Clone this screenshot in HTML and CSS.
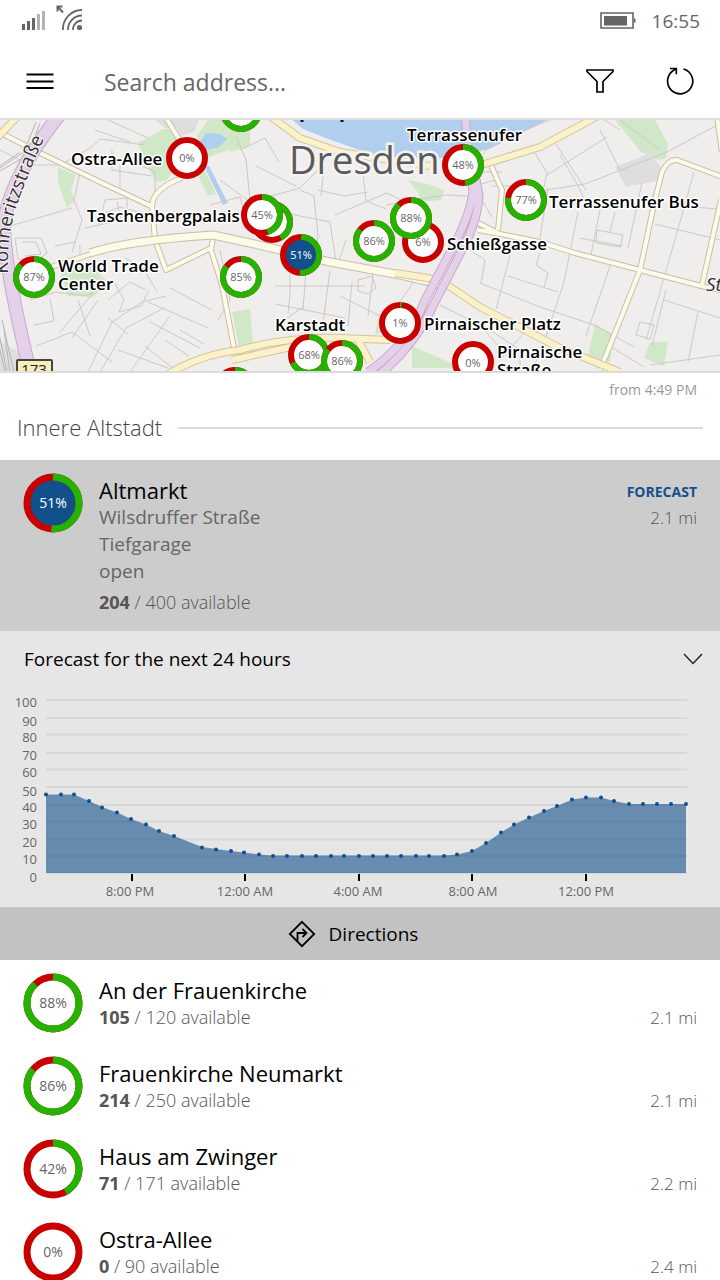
FILE: index.html
```html
<!DOCTYPE html>
<html lang="en">
<head>
<meta charset="utf-8">
<meta name="viewport" content="width=device-width, initial-scale=1">
<title>Parking – Dresden</title>
<link rel="stylesheet" href="styles.css">
</head>
<body>
<div class="app">
  <div class="status">
    <svg class="status-left" width="64" height="32" viewBox="0 0 64 32" aria-hidden="true">
      <path fill="#666" d="M2 20h3v6H2zM7 17h3v9H7zM12 14h3v12h-3z"/>
      <path fill="#b3b3b3" d="M17 10h3v16h-3zM22 7h3v19h-3z"/>
      <g fill="none" stroke="#666" stroke-width="1.8"><path d="M43 26A19 19 0 0 1 62 6"/><path d="M48 26A14 14 0 0 1 62 11.500"/><path d="M53 26A9 9 0 0 1 62 16.500"/></g>
      <circle cx="59.500" cy="23.500" r="2.600" fill="#666"/>
      <path d="M43 8.500L38 3M37.500 7.500V2.500H42.500" fill="none" stroke="#666" stroke-width="2"/>
    </svg>
    <div class="status-right">
      <svg width="36" height="18" viewBox="0 0 36 18" aria-hidden="true"><path d="M1 1h32v15H1z" fill="none" stroke="#666" stroke-width="1.600"/><path d="M4 4h23v9.500H4zM34 6.500h1.500v4H34z" fill="#666"/></svg>
      <span class="clock">16:55</span>
    </div>
  </div>

  <header class="bar">
    <button class="icon-btn" type="button" aria-label="Menu"><svg width="28" height="18" viewBox="0 0 28 18"><path d="M0.500 2.500h27M0.500 9.500h27M0.500 16h27" stroke="#000" stroke-width="1.800"/></svg></button>
    <input class="search" type="text" placeholder="Search address..." aria-label="Search address">
    <button class="icon-btn" type="button" aria-label="Filter"><svg width="28" height="28" viewBox="0 0 28 28"><path d="M1 3h26v1.500L17 14.500V25h-6V14.500L1 4.500z" fill="none" stroke="#000" stroke-width="1.700"/></svg></button>
    <button class="icon-btn" type="button" aria-label="Refresh"><svg width="28" height="30" viewBox="0 0 28 30"><path d="M17.500 3A12.600 12.600 0 1 1 7 4.800L10 2.500M4 2.500h6.300v5.800" fill="none" stroke="#000" stroke-width="1.700"/></svg></button>
  </header>

  <svg class="map" viewBox="0 120 720 251" preserveAspectRatio="xMidYMid slice" role="img" aria-label="Map of car parks in Dresden">
    <defs><path id="street-line" d="M8 274Q7 235 16 208Q26 178 47 132"/></defs>
    <rect class="land" x="-400" y="0" width="1600" height="600"/>
    <g class="park">
      <path d="M138 143l25-14 12 0 12 21-20 30-12 2zM197 136l12-18h35v26l-37 14zM58 167l18 8-5 15 4 10-8 8-9-25zM200 160l16 34-8 2-14-28zM60 270l28-9 20 22-15 14-25-1zM232 312l18-3 3 35-14 3zM228 120h22v26l-20 6z"/>
      <path d="M408 180l20 4 16 6-3 10-20 2-3-10zM615 120h40l13 24-2 14-8 2-18-9zM595 324l18 10-3 28-22-6zM650 342h18l-4 24-20-8zM378 318l12-8-3 22-12 2zM412 346l50 22h-50z"/>
    </g>
    <g class="block"><path d="M174 120h25l-5 12-14 4zM615 167l35-14 12 16-6 12-30 6zM0 342l20 10v20H0zM155 120h40v8h-30z"/></g>
    <path class="water" d="M283 112l20 17 25 10 40 14 40 5 45 0 35-9 30-14 36-19zM198 145l8-12 14 1 7 5-8 8-11 3-8-2zM204 166l5 0 19 37-5 2z"/>

    <g class="lane">
      <path d="M0 150l30 15 30 0 32-18 8-8 45 6M95 130l35 12M108 120l40 18M80 172l-6 28 8 20-10 32M112 150v20l40 6M120 165v22M130 160l25 12v20M105 200l-6 24 28-6v-20l-22 2M10 226l62-18M85 228l36-8-4-18M15 238h26l6 15-8 6H18zM22 242h14l5 12-16 2M80 245v20M100 215l20-8 30 8M55 246l20-4"/>
      <path d="M30 300l26-8 30 4 28-14 10 18-5 12 22-6 8-16M34 325l20-4-4-22M36 346l36-14 40 30M60 332l34-40M72 338l26-38M88 372l24-50 30-20 24-6M100 372l26-44 38-20M118 350l50 18M130 372l40-56M108 318l20 16M148 302l60 26M150 322l50 26M170 288l42 22M145 346l30 24M165 340l24 16M180 330l24 14M125 258l18 10 14 24M108 300l22-18 16 8M220 250l10 50-12 20M78 300l12 36"/>
      <path d="M210 205l30-8 8 28M220 180l30 22 50-14 22-22M250 200l-4-40-10-24M256 166l40 20M240 150l25-12 14 24M300 190l14 6 4 40-4 28M318 190l26 6 24-4M290 214l40 8 6 40M335 215l52-22 20 10M346 240l-8 24M325 160l-4 36M362 165l4 36 20 8M275 286l90 0M290 264v30l-2 20M306 270l-3 40M275 304l70 14M282 322l22-16M330 270l-8 60M352 282l-4 44M374 266l-6 50M358 280l14-4 4 12-8 6-10-3zM340 296l40 20M420 272l-20 30M386 205l60-10 34 2 12 20M455 240l30 20-4 24M440 305l40 20 30 34"/>
      <path d="M535 153l12 20-4 18-12 6M547 175l60-38M556 144l30 46M600 130l20 40M545 190l40-6 82-32 52-28M560 155l20 34 8 20M620 130l-22-14M492 186l40 0M548 188l-8 50M578 212l-14 70-20 60M600 210l-10 50M615 212l-5 20M642 182l-14 66M620 120l40 30M597 230l26 5-3 12-24-4zM580 238l42 8M510 255l-14 54M540 253l-4 12 12 8-4 14M508 276l50 16M480 283l60 24 54 18 40 22M610 266l-24 70M694 172l-14 50-34 118M655 224l65 16M668 205l50 4M666 290l-14 56M664 300l56 18M698 312l-10 50M640 322l14 3-4 14-14-4zM650 365l70-10M608 345l36 22M490 330l30 20 0 22M500 360l30-34M530 372l18-32 40 20"/>
      <path d="M495 180l-14 4M480 172h22M492 124l-8 30M500 140l60-24M486 150l60-30"/>
    </g>
    <g class="rail"><path d="M0 168l24-16 12-30M0 171l28-16 12-32M0 166l20-14M4 330l6 42M0 338l7 34M0 350l5 22M2 320l12 52"/></g>

    <g class="road-edge">
      <path d="M-5 130L40 153L100 182L151 206M166 118L187 152M182 178Q154 188 152 205L155 240L166 270L211 248M213 238L211 250L222 285L234 348M35 272L85 256Q105 248 140 241Q180 235 213 235L250 243L330 262L400 275L445 288"/>
      <path d="M478 223L500 234L540 242L575 253L640 270L705 287L725 291M725 178L677 160Q668 159 662 172L655 200L640 270L613 338L600 370M717 116L722 152M721 200L702 285M490 163L502 190L498 230M478 230L500 234"/>
    </g>
    <g class="road">
      <path d="M-5 130L40 153L100 182L151 206M166 118L187 152M182 178Q154 188 152 205L155 240L166 270L211 248M213 238L211 250L222 285L234 348M35 272L85 256Q105 248 140 241Q180 235 213 235L250 243L330 262L400 275L445 288"/>
      <path d="M478 223L500 234L540 242L575 253L640 270L705 287L725 291M725 178L677 160Q668 159 662 172L655 200L640 270L613 338L600 370M717 116L722 152M721 200L702 285M490 163L502 190L498 230M478 230L500 234"/>
    </g>
    <path class="road-edge wide" d="M90 253Q130 240 213 235L250 243L330 262L400 275L440 284"/>
    <path class="road wide" d="M90 253Q130 240 213 235L250 243L330 262L400 275L440 284"/>
    <path class="main-edge" d="M-5 140L18 116M165 376Q200 354 240 350Q290 336 340 338L390 340M232 360L300 345M395 273L440 280L480 307L560 348L620 372M270 116L300 138L340 152L430 166M478 166L540 147L598 116M358 340L370 362"/>
    <path class="main" d="M-5 140L18 116M165 376Q200 354 240 350Q290 336 340 338L390 340M232 360L300 345M395 273L440 280L480 307L560 348L620 372M270 116L300 138L340 152L430 166M478 166L540 147L598 116M358 340L370 362"/>
    <g class="trunk-edge"><path class="trunk-l" d="M60 114Q8 180 4 225Q4 265 31 376"/><path d="M465 114L470 165L473 192Q470 215 455 243L425 300Q408 345 368 372M474 170L479 195Q478 220 463 248L434 304Q415 345 380 374"/></g>
    <g class="trunk"><path class="trunk-l" d="M60 114Q8 180 4 225Q4 265 31 376"/><path d="M465 114L470 165L473 192Q470 215 455 243L425 300Q408 345 368 372M474 170L479 195Q478 220 463 248L434 304Q415 345 380 374"/></g>

    <g class="shield"><rect x="17" y="360" width="35" height="20" rx="1"/><text x="34" y="375">173</text></g>
    <text class="street"><textPath href="#street-line">Könneritzstraße</textPath></text>
    <text class="street" x="706" y="291" font-style="italic">St</text>
    <text class="city" x="289" y="174">Dresden</text>
    <path d="M302 118v4M342 118v4" stroke="#111" stroke-width="3"/>

    <g class="place">
      <text x="71" y="165">Ostra-Allee</text>
      <text x="87" y="222">Taschenbergpalais</text>
      <text x="58" y="272">World Trade</text>
      <text x="58" y="290">Center</text>
      <text x="407" y="141">Terrassenufer</text>
      <text x="549" y="208">Terrassenufer Bus</text>
      <text x="447" y="250">Schießgasse</text>
      <text x="275" y="331">Karstadt</text>
      <text x="424" y="330">Pirnaischer Platz</text>
      <text x="497" y="358">Pirnaische</text>
      <text x="497" y="376">Straße</text>
    </g>

    <g class="pin">
      <g transform="translate(241 111)"><circle r="18"/><circle class="free" r="18" pathLength="100" stroke-dasharray="90 100"/></g>
      <g transform="translate(187 158)"><circle r="18"/><text y="4">0%</text></g>
      <g transform="translate(463 165)"><circle r="18"/><circle class="free" r="18" pathLength="100" stroke-dasharray="48 100"/><text y="4">48%</text></g>
      <g transform="translate(526 200)"><circle r="18"/><circle class="free" r="18" pathLength="100" stroke-dasharray="77 100"/><text y="4">77%</text></g>
      <g transform="translate(272 222)"><circle r="18"/><circle class="free" r="18" pathLength="100" stroke-dasharray="42 100"/></g>
      <g transform="translate(262 215)"><circle r="18"/><circle class="free" r="18" pathLength="100" stroke-dasharray="45 100"/><text y="4">45%</text></g>
      <g transform="translate(423 242)"><circle r="18"/><circle class="free" r="18" pathLength="100" stroke-dasharray="6 100"/><text y="4">6%</text></g>
      <g transform="translate(411 218)"><circle r="18"/><circle class="free" r="18" pathLength="100" stroke-dasharray="88 100"/><text y="4">88%</text></g>
      <g transform="translate(374 241)"><circle r="18"/><circle class="free" r="18" pathLength="100" stroke-dasharray="86 100"/><text y="4">86%</text></g>
      <g class="active" transform="translate(301 255)"><circle r="18"/><circle class="free" r="18" pathLength="100" stroke-dasharray="51 100"/><text y="4">51%</text></g>
      <g transform="translate(241 277)"><circle r="18"/><circle class="free" r="18" pathLength="100" stroke-dasharray="85 100"/><text y="4">85%</text></g>
      <g transform="translate(34 277)"><circle r="18"/><circle class="free" r="18" pathLength="100" stroke-dasharray="87 100"/><text y="4">87%</text></g>
      <g transform="translate(400 323)"><circle r="18"/><circle class="free" r="18" pathLength="100" stroke-dasharray="1.500 100"/><text y="4">1%</text></g>
      <g transform="translate(309 355)"><circle r="18"/><circle class="free" r="18" pathLength="100" stroke-dasharray="68 100"/><text y="4">68%</text></g>
      <g transform="translate(342 361)"><circle r="18"/><circle class="free" r="18" pathLength="100" stroke-dasharray="86 100"/><text y="4">86%</text></g>
      <g transform="translate(473 362)"><circle r="18"/><text y="5">0%</text></g>
      <g transform="translate(235 388)"><circle r="18"/><circle class="free" r="18" pathLength="100" stroke-dasharray="60 100"/></g>
    </g>
  </svg>

  <main class="content">
    <p class="updated">from 4:49 PM</p>
    <h2 class="group"><span>Innere Altstadt</span></h2>

    <section class="lot selected">
      <svg class="ring active" viewBox="-30 -30 60 60"><circle r="26"/><circle class="free" r="26" pathLength="100" stroke-dasharray="51 100"/><text y="5">51%</text></svg>
      <div class="info">
        <h3>Altmarkt</h3>
        <p class="detail">Wilsdruffer Straße</p>
        <p class="detail">Tiefgarage</p>
        <p class="detail">open</p>
        <p class="avail last"><b>204</b> / 400 available</p>
      </div>
      <div class="side"><a class="forecast-link" href="#forecast">FORECAST</a><span class="dist">2.1 mi</span></div>
    </section>

    <section class="forecast" id="forecast">
      <button class="forecast-head" type="button"><span>Forecast for the next 24 hours</span><svg width="20" height="14" viewBox="0 0 20 14" aria-hidden="true"><path d="M1 2l9 9.500L19 2" fill="none" stroke="#222" stroke-width="1.400"/></svg></button>
      <svg class="chart" viewBox="0 687 720 220" role="img" aria-label="Forecast of free spaces in percent">
        <path class="grid" d="M46 700h641M46 718h641M46 734.500h641M46 753h641M46 769.500h641M46 787h641M46 805h641M46 821.500h641M46 839.500h641M46 856h641M46 873h641"/>
        <path class="area" d="M46 794.500L61 794.500L74 794.500L89 801L102 807L117 812.500L131 819L146 824.500L159 831L174 836L202 847L216 849L231 851L244 852.500L259 854.500L272 855.500L444 855.500L457 854.500L472 851L486 843L501 832.500L514 824.500L529 817.500L544 811L557 806L572 799.500L586 797.500L601 797.500L614 801L629 804L686 804V873H46z"/>
        <path class="dots" d="M46 794.500h0M61 794.500h0M74 794.500h0M89 801h0M102 807.500h0M117 812.500h0M131 819h0M146 824.500h0M159 831h0M174 836h0M202 847.500h0M216 849.500h0M231 851h0M244 852.500h0M259 854.500h0M273 856h0M287 856h0M302 856h0M316 856h0M331 856h0M344 856h0M359 856h0M373 856h0M387 856h0M401 856h0M416 856h0M429 856h0M444 856h0M457 854.500h0M472 851h0M486 843h0M501 832.500h0M514 824.500h0M529 817.500h0M544 811h0M557 806h0M572 799.500h0M586 797.500h0M601 797.500h0M614 801h0M629 804h0M643 804h0M657 804h0M671 804h0M686 804h0"/>
        <path class="ticks" d="M132 874v7M245 874v7M359 874v7M472 874v7M586 874v7"/>
        <g class="y-axis">
          <text x="37" y="707">100</text><text x="37" y="726">90</text><text x="37" y="742">80</text><text x="37" y="760">70</text><text x="37" y="777">60</text><text x="37" y="796">50</text><text x="37" y="812">40</text><text x="37" y="829">30</text><text x="37" y="847">20</text><text x="37" y="864">10</text><text x="37" y="882">0</text>
        </g>
        <g class="x-axis">
          <text x="130" y="896">8:00 PM</text><text x="245" y="896">12:00 AM</text><text x="358" y="896">4:00 AM</text><text x="473" y="896">8:00 AM</text><text x="586" y="896">12:00 PM</text>
        </g>
      </svg>
      <button class="directions" type="button"><svg width="28" height="28" viewBox="0 0 28 28" aria-hidden="true"><path d="M14 1.800L26.200 14L14 26.200L1.800 14zM9.500 21V13H18M14.500 9l4 4-4 4" fill="none" stroke="#000" stroke-width="1.800"/></svg><span>Directions</span></button>
    </section>

    <section class="lot">
      <svg class="ring" viewBox="-30 -30 60 60"><circle r="26"/><circle class="free" r="26" pathLength="100" stroke-dasharray="88 100"/><text y="5">88%</text></svg>
      <div class="info"><h3>An der Frauenkirche</h3><p class="avail"><b>105</b> / 120 available</p></div>
      <div class="side"><span class="dist">2.1 mi</span></div>
    </section>
    <section class="lot">
      <svg class="ring" viewBox="-30 -30 60 60"><circle r="26"/><circle class="free" r="26" pathLength="100" stroke-dasharray="86 100"/><text y="5">86%</text></svg>
      <div class="info"><h3>Frauenkirche Neumarkt</h3><p class="avail"><b>214</b> / 250 available</p></div>
      <div class="side"><span class="dist">2.1 mi</span></div>
    </section>
    <section class="lot">
      <svg class="ring" viewBox="-30 -30 60 60"><circle r="26"/><circle class="free" r="26" pathLength="100" stroke-dasharray="42 100"/><text y="5">42%</text></svg>
      <div class="info"><h3>Haus am Zwinger</h3><p class="avail"><b>71</b> / 171 available</p></div>
      <div class="side"><span class="dist">2.2 mi</span></div>
    </section>
    <section class="lot">
      <svg class="ring" viewBox="-30 -30 60 60"><circle r="26"/><text y="5">0%</text></svg>
      <div class="info"><h3>Ostra-Allee</h3><p class="avail"><b>0</b> / 90 available</p></div>
      <div class="side"><span class="dist">2.4 mi</span></div>
    </section>
  </main>
</div>
</body>
</html>
```
FILE: styles.css
```css
* { box-sizing: border-box; }
body { margin: 0; background: #fff; color: #000; font-family: "Open Sans", "Noto Sans", sans-serif; }
h2, h3, p { margin: 0; font-weight: 400; }
button, input { font: inherit; color: inherit; border: 0; background: none; padding: 0; }
svg { display: block; flex: none; }
.app { height: 100vh; display: flex; flex-direction: column; }

.status { flex: none; height: 41px; padding: 0 20px; display: flex; justify-content: space-between; align-items: center; }
.status-left { margin-top: -2px; }
.status-right { display: flex; align-items: center; gap: 16px; color: #666; }
.clock { font-size: 19px; font-weight: 400; line-height: 26px; }

.bar { flex: none; height: 79px; padding: 2px 26px 0; display: flex; align-items: center; gap: 52px; border-bottom: 2px solid #dcdcdc; }
.icon-btn { flex: none; width: 28px; display: grid; place-items: center; cursor: pointer; }
.search { flex: 1; min-width: 0; height: 40px; padding-top: 2px; margin-left: -2px; font-size: 23px; outline: none; }
.search::placeholder { color: #666; opacity: 1; }

.map { width: 100%; height: 251px; }
.land { fill: #f0eeed; }
.park { fill: #d0e7c8; }
.block { fill: #dedede; }
.water { fill: #b0cfef; }
.lane, .rail, .road, .road-edge, .main, .main-edge, .trunk, .trunk-edge { fill: none; stroke-linejoin: round; }
.lane { stroke: #cbc9c6; stroke-width: 1; }
.rail { stroke: #b5b5b5; stroke-width: 1; }
.road-edge { stroke: #c4bfb0; stroke-width: 6; }
.road { stroke: #fdfae6; stroke-width: 4; }
.road-edge.wide { stroke-width: 9; }
.road.wide { stroke-width: 7; }
.main-edge { stroke: #d0c5a0; stroke-width: 8; }
.main { stroke: #fcf1c8; stroke-width: 6; }
.trunk-edge { stroke: #c4abc9; stroke-width: 9; }
.trunk { stroke: #e5d0e9; stroke-width: 7; }
.trunk-edge .trunk-l { stroke-width: 14; }
.trunk .trunk-l { stroke-width: 12; }
.shield rect { fill: #f7eeb8; stroke: #444; stroke-width: 2; }
.shield text { font-size: 15px; text-anchor: middle; fill: #222; }
.street { font-size: 19px; fill: #333; stroke: #f7f5f4; stroke-width: 2; paint-order: stroke; }
.city { font-size: 38px; fill: #5a5a5a; stroke: #f4f2f2; stroke-width: 5; paint-order: stroke; }
.place { font-size: 17px; font-weight: 600; fill: #000; stroke: #fff; stroke-width: 3; stroke-linejoin: round; paint-order: stroke; }

.pin circle, .ring circle { fill: #fff; stroke: #c80000; }
.pin circle { stroke-width: 6; }
.ring circle { stroke-width: 7; }
.pin .free, .ring .free { fill: none; stroke: #24b300; transform: rotate(-90deg); }
.pin text { font-size: 11px; fill: #666; text-anchor: middle; }
.ring text { font-size: 14px; fill: #666; text-anchor: middle; }
.pin .active circle, .ring.active circle { fill: #12508c; }
.pin .active .free, .ring.active .free { fill: none; }
.pin .active text, .ring.active text { fill: #fff; }

.content { flex: 1; min-height: 0; overflow-y: auto; scrollbar-width: none; border-top: 2px solid #dcdcdc; }
.updated { padding: 7px 23px 0; text-align: right; font-size: 14px; line-height: 20px; color: #999; }
.group { padding: 13px 17px 18px; display: flex; align-items: center; gap: 16px; font-size: 22px; font-weight: 300; line-height: 29px; color: #444; }
.group::after { content: ""; flex: 1; height: 2px; background: #dcdcdc; }

.lot { height: 83px; padding: 13px 23px 0; display: flex; gap: 16px; }
.ring { width: 60px; height: 60px; }
.info { flex: 1; min-width: 0; padding-top: 3px; }
h3 { font-size: 22px; line-height: 28px; }
.detail { font-size: 19px; line-height: 27px; color: #666; }
.avail { font-size: 18px; font-weight: 300; line-height: 27px; color: #555; }
.avail b { font-weight: 700; }
.avail.last { padding-top: 4px; }
.selected { height: 171px; background: #ccc; }
.side { display: flex; flex-direction: column; justify-content: flex-end; align-items: flex-end; height: 59px; }
.forecast-link { font-size: 14px; font-weight: 700; line-height: 24px; color: #12508c; text-decoration: none; }
.dist { font-size: 17px; font-weight: 300; line-height: 28px; color: #555; }

.forecast { background: #e6e6e6; }
.forecast-head { width: 100%; height: 56px; padding: 0 17px 0 24px; display: flex; justify-content: space-between; align-items: center; font-size: 19px; cursor: pointer; }
.chart { width: 100%; height: auto; }
.grid { fill: none; stroke: #d7d7d7; stroke-width: 2; }
.area { fill: #12508c; fill-opacity: 0.600; }
.dots { fill: none; stroke: #12508c; stroke-width: 4; stroke-linecap: round; }
.ticks { stroke: #000; stroke-width: 2; }
.y-axis, .x-axis { font-size: 13px; font-weight: 500; fill: #666; }
.y-axis { text-anchor: end; }
.x-axis { text-anchor: middle; }
.directions { width: 100%; height: 53px; padding-right: 14px; display: flex; justify-content: center; align-items: center; gap: 13px; background: #c2c2c2; font-size: 19px; cursor: pointer; }
```
